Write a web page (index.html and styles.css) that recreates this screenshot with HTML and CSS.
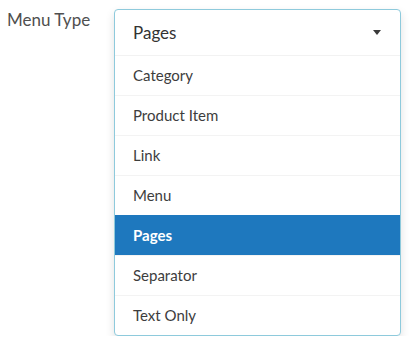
FILE: index.html
```html
<!DOCTYPE html>
<html>
<head>
<meta charset="utf-8">
<link rel="stylesheet" href="styles.css">
</head>
<body>
<div class="field">
  <label class="field-label">Menu Type</label>
  <div class="dropdown">
    <div class="select">
      <span class="select-value">Pages</span>
      <span class="caret"></span>
    </div>
    <ul class="menu">
      <li class="item">Category</li>
      <li class="item">Product Item</li>
      <li class="item">Link</li>
      <li class="item">Menu</li>
      <li class="item active">Pages</li>
      <li class="item">Separator</li>
      <li class="item">Text Only</li>
    </ul>
  </div>
</div>
</body>
</html>
```
FILE: styles.css
```css
html, body {
  margin: 0;
  padding: 0;
  background: #ffffff;
}
body {
  font-family: Lato, "Open Sans", sans-serif;
  color: #333333;
}
.field {
  display: flex;
  align-items: flex-start;
  padding-top: 9px;
}
.field-label {
  width: 107px;
  padding-left: 7px;
  padding-top: 0;
  font-size: 17px;
  line-height: 22px;
  color: #4f4f4f;
}
.dropdown {
  width: 285px;
  border: 1px solid #8ecadc;
  border-radius: 4px;
  background: #ffffff;
  box-shadow: 0 4px 10px rgba(0, 0, 0, 0.12);
  overflow: hidden;
}
.select {
  display: flex;
  align-items: center;
  justify-content: space-between;
  height: 45px;
  padding: 0 18px 0 18px;
  border-bottom: 1px solid #f2f2f2;
}
.select-value {
  font-size: 17px;
  color: #333333;
}
.caret {
  width: 0;
  height: 0;
  border-left: 4px solid transparent;
  border-right: 4px solid transparent;
  border-top: 5px solid #3a3a3a;
  margin-right: 1px;
}
.menu {
  list-style: none;
  margin: 0;
  padding: 0;
}
.item {
  height: 39px;
  line-height: 39px;
  padding-left: 18px;
  font-size: 15px;
  color: #3d3d3d;
  border-top: 1px solid #f3f3f3;
}
.item:first-child {
  border-top: none;
}
.item.active {
  background: #1e78be;
  color: #ffffff;
  font-weight: 700;
  border-top-color: #1e78be;
}
```
